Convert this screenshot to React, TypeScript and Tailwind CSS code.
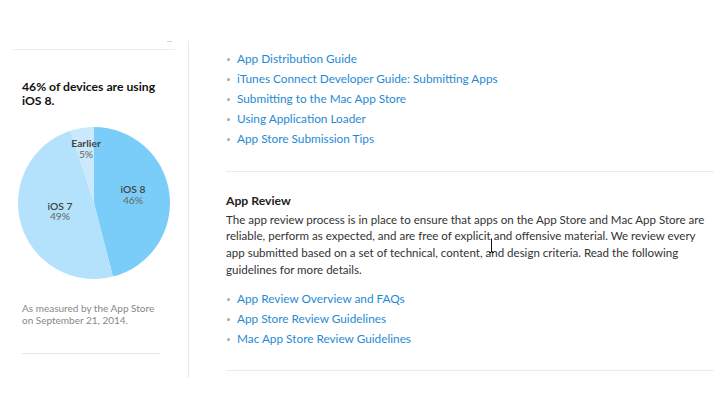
import React from "react";

const font = { fontFamily: "Lato, 'Open Sans', sans-serif" };

function Pie() {
  const cx = 76, cy = 76, r = 76;
  const pt = (deg: number) => {
    const a = (deg * Math.PI) / 180;
    return [cx + r * Math.sin(a), cy - r * Math.cos(a)];
  };
  const slice = (a0: number, a1: number) => {
    const [x0, y0] = pt(a0);
    const [x1, y1] = pt(a1);
    const large = a1 - a0 > 180 ? 1 : 0;
    return `M${cx} ${cy} L${x0} ${y0} A${r} ${r} 0 ${large} 1 ${x1} ${y1} Z`;
  };
  return (
    <svg width="152" height="153" viewBox="0 0 152 153" className="block ml-[18px]">
      <path d={slice(0, 165.6)} fill="#7bcdf9" />
      <path d={slice(165.6, 342)} fill="#b4e1fb" />
      <path d={slice(342, 360)} fill="#cbe9fc" />
      <g style={font} fontSize="10.3" textAnchor="middle">
        <text x="68" y="20" fill="#444" fontWeight="700">Earlier</text>
        <text x="68" y="30.5" fill="#666">5%</text>
        <text x="115" y="66" fill="#444" fontWeight="600">iOS 8</text>
        <text x="115" y="76.5" fill="#666">46%</text>
        <text x="42" y="82.5" fill="#444" fontWeight="600">iOS 7</text>
        <text x="42" y="93" fill="#666">49%</text>
      </g>
    </svg>
  );
}

function LinkList({ items }: { items: string[] }) {
  return (
    <ul className="flex flex-col">
      {items.map((t) => (
        <li key={t} className="flex items-center h-[20px]">
          <span className="ml-[1px] w-[3px] h-[3px] rounded-full bg-[#a8a8a8]" />
          <span className="ml-[7px] text-[11.8px] text-[#1f8ad4]">{t}</span>
        </li>
      ))}
    </ul>
  );
}

export default function App() {
  return (
    <div className="w-[720px] h-[420px] bg-white relative overflow-hidden flex" style={font}>
      <div className="w-[189px] shrink-0 mt-[41px] h-[337px] border-r border-[#e9e9e9] flex flex-col">
        <div className="ml-[167px] w-[5px] h-px bg-[#d0d0d0]" />
        <div className="mt-[7px] ml-[13px] w-[162px] h-px bg-[#ededed]" />
        <h2 className="mt-[30px] ml-[22px] text-[12.2px] leading-[14px] font-bold text-[#111]">
          46% of devices are using
          <br />
          iOS 8.
        </h2>
        <div className="mt-[19px]">
          <Pie />
        </div>
        <p className="mt-[22px] ml-[22px] text-[10px] leading-[12px] text-[#888]">
          As measured by the App Store
          <br />
          on September 21, 2014.
        </p>
        <div className="mt-[27px] ml-[22px] w-[138px] h-px bg-[#e6e6e6]" />
      </div>

      <div className="ml-[37px] w-[488px] flex flex-col">
        <div className="mt-[49px]">
          <LinkList
            items={[
              "App Distribution Guide",
              "iTunes Connect Developer Guide: Submitting Apps",
              "Submitting to the Mac App Store",
              "Using Application Loader",
              "App Store Submission Tips",
            ]}
          />
        </div>
        <div className="mt-[22px] h-px bg-[#ebebeb]" />
        <h3 className="mt-[20px] text-[12.2px] leading-[17px] font-bold text-[#222]">App Review</h3>
        <p className="mt-[2.5px] text-[11.55px] leading-[16.7px] text-[#333]">
          The app review process is in place to ensure that apps on the App Store and Mac App Store are
          reliable, perform as expected, and are free of explicit and offensive material. We review every
          app submitted based on a set of technical, content, and design criteria. Read the following
          guidelines for more details.
        </p>
        <div className="mt-[11px]">
          <LinkList
            items={["App Review Overview and FAQs", "App Store Review Guidelines", "Mac App Store Review Guidelines"]}
          />
        </div>
        <div className="mt-[21px] h-px bg-[#ebebeb]" />
      </div>

      <svg className="absolute left-[488px] top-[238px]" width="7" height="16" viewBox="0 0 7 16">
        <path d="M3.5 0.5 V14.5 M1 14.5 H3 M4 14.5 H6" stroke="#111" strokeWidth="1" fill="none" />
      </svg>
    </div>
  );
}
